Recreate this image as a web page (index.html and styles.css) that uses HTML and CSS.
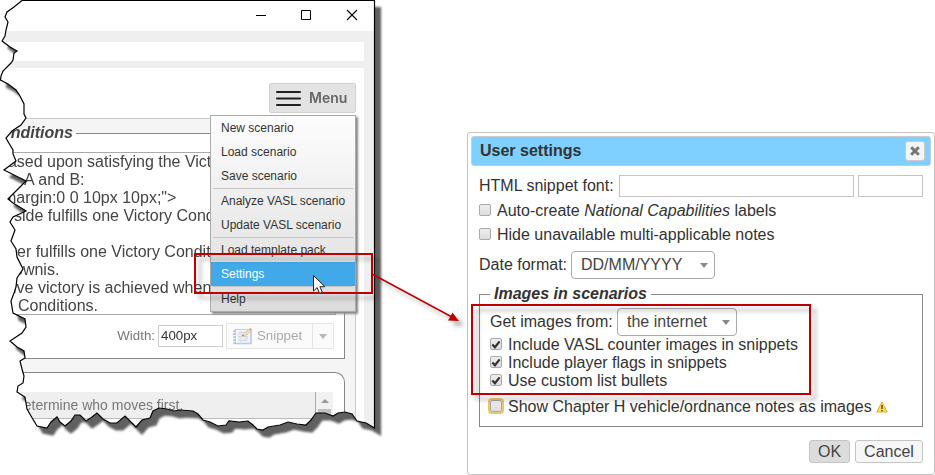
FILE: index.html
```html
<!DOCTYPE html>
<html lang="en">
<head>
<meta charset="utf-8">
<title>User settings</title>
<link rel="stylesheet" href="styles.css">
</head>
<body>
<main class="stage">
  <section class="torn">
    <div class="window">
      <header class="titlebar">
        <svg width="104" height="12" viewBox="0 0 104 12" fill="none" stroke="#000"><path d="M0 6.500h10M45.500 1.500h9v9h-9z"/><path d="M91 1l10 10M101 1l-10 10" stroke-width="1.100"/></svg>
      </header>
      <div class="toolbar"></div>
      <div class="page">
        <div class="page-head">
          <button class="menu-button"><svg width="25" height="17" viewBox="0 0 25 17" stroke="#231f20" stroke-width="2" stroke-linecap="round"><path d="M1 2h23M1 8.500h23M1 15h23"/></svg>Menu</button>
        </div>
        <div class="panel">
          <div class="victory">
            <div class="legend"><span>nditions</span></div>
            <div class="textarea">
              <p class="l1">based upon satisfying the Vict</p>
              <p class="l2">A and B:</p>
              <p class="l3">margin:0 0 10px 10px;"&gt;</p>
              <p class="l4">side fulfills one Victory Cond</p>
              <p>&nbsp;</p>
              <p class="l6">er fulfills one Victory Condit</p>
              <p class="l7">ownis.</p>
              <p class="l8">ive victory is achieved when</p>
              <p class="l9">Conditions.</p>
            </div>
            <div class="snippet-row">
              <label>Width:</label><span class="width-input">400px</span>
              <span class="snippet"><span class="snippet-main">
                <svg width="20" height="18" viewBox="0 0 20 18" fill="none"><path d="M3 2.500h16v14H3z" fill="#f1f6fc" stroke="#c3d4ea"/><path d="M3 16.500h16v-14" stroke="#b7cce8" stroke-width="1.500"/><path d="M1 4h3M1 7h3M1 10h3M1 13h3M1 16h3" stroke="#aaa"/><path d="M7 5.500h8v8H7zM9 4v11M13 4v11M6 9.500h10" stroke="#d0d8e3"/><path d="M10 9l7-7 2 2-7 6z" fill="#f6dcb2" stroke="#d9bf9c" stroke-width=".7"/><path d="M17 2l1.500-1.500 1.500 2L19 4z" fill="#e9a6a0"/><path d="M10 9l.8-2 1.400 1.500z" fill="#777"/></svg>Snippet</span><span class="snippet-drop"><i class="tri"></i></span></span>
            </div>
          </div>
          <div class="ssr">
            <div class="list"><span class="list-text">determine who moves first.</span><span class="scroll"><i class="up"></i><b></b></span></div>
          </div>
        </div>
      </div>
    </div>
    <svg class="edge" width="376" height="432" viewBox="0 0 376 432"><path fill="none" stroke="#000" stroke-width="1.200" d="M22 .5L14 7 7 12 5 17 8 22 6 30 5 36 2 41 10 47 17 51 14 53 13 60 11 63 3 71 1 76 .5 80 8 84 16 90 20 96 24 104 24 114 26 118 21 125 12 131 6 138 10 145 13 150 13 154 16 161 4 170 14 175 26 181 20 187 8 199 13 203 26 211 13 217 10 222 15 230 11 241 16 249 17 257 23 269 17 278 16 287 14 293 11 301 13 313 25 319 26 327 22 333 10 341 17 347 24 351 25 358 20 361 22 369 24 376 23 383 18 386 17 392 25 397 27 409 31 416 37 426 47 428 51 422 57 417 60 422 65 426 71 421 75 415 80 415 86 421 92 417 97 413 103 419 110 423 117 423 125 416 136 427 142 420 150 418 153 411 159 408 167 409 174 411 180 410 193 411 198 414 203 420 210 422 218 426 226 425 229 421 239 422 248 421 253 425 257 429 263 430 268 427 280 425 288 422 297 424 306 425 311 420 316 413 325 413 333 416 338 413 345 412 352 414 357 421 366 423 374.500 428V.5z"/></svg>
  </section>

  <nav class="menu">
    <a>New scenario</a><a>Load scenario</a><a>Save scenario</a><hr>
    <a>Analyze VASL scenario</a><a>Update VASL scenario</a><hr>
    <a>Load template pack</a><a class="active">Settings</a><hr>
    <a>Help</a>
  </nav>

  <section class="dialog">
    <header class="dialog-title">User settings<button class="close"><svg width="10" height="10" viewBox="0 0 10 10" stroke="#777" stroke-width="3"><path d="M1.200 1.200l7.600 7.600M8.800 1.200L1.200 8.800"/></svg></button></header>
    <div class="dialog-body">
      <div class="font-row"><span>HTML snippet font:</span><span class="input wide"></span><span class="input small"></span></div>
      <label class="check"><i class="box"></i><span>Auto-create <em>National Capabilities</em> labels</span></label>
      <label class="check"><i class="box"></i><span>Hide unavailable multi-applicable notes</span></label>
      <div class="date-row"><span>Date format:</span><span class="select date">DD/MM/YYYY<i class="tri"></i></span></div>
      <fieldset class="images">
        <legend>Images in scenarios</legend>
        <div class="source-row"><span>Get images from:</span><span class="select source">the internet<i class="tri"></i></span></div>
        <label class="check tight"><i class="box"><svg width="11" height="11" viewBox="0 0 11 11"><path d="M1.500 5.500L4.300 8.500 9.500 2" fill="none" stroke="#333" stroke-width="2.400"/></svg></i><span>Include VASL counter images in snippets</span></label>
        <label class="check tight"><i class="box"><svg width="11" height="11" viewBox="0 0 11 11"><path d="M1.500 5.500L4.300 8.500 9.500 2" fill="none" stroke="#333" stroke-width="2.400"/></svg></i><span>Include player flags in snippets</span></label>
        <label class="check tight"><i class="box"><svg width="11" height="11" viewBox="0 0 11 11"><path d="M1.500 5.500L4.300 8.500 9.500 2" fill="none" stroke="#333" stroke-width="2.400"/></svg></i><span>Use custom list bullets</span></label>
        <label class="check chapter"><i class="box focus"></i><span>Show Chapter H vehicle/ordnance notes as images</span><svg class="warn" width="12" height="12" viewBox="0 0 12 12"><path d="M6 1L11.300 11H.7z" fill="#ffdc4a" stroke="#d8b13a" stroke-linejoin="round"/><path d="M6 4v4M6 9v1.300" stroke="#5a4a20" stroke-width="1.500"/></svg></label>
      </fieldset>
    </div>
    <footer class="buttons"><button class="btn ok">OK</button><button class="btn cancel">Cancel</button></footer>
  </section>

  <svg class="marks" width="935" height="475" viewBox="0 0 935 475">
    <g fill="none" stroke="#c00000" stroke-width="2"><path d="M195 254h177v39H195zM472 305h338v89H472z"/><path d="M373 274.500L451 316.500" stroke-width="1.500"/><path d="M459 321l-11-.5 4.500-8z" fill="#c00000" stroke="none"/></g>
  </svg>
  <svg class="cursor" width="13" height="20" viewBox="0 0 13 20"><path d="M.5.500v15.500l3.600-3.400 2.500 5.800 2.700-1.200-2.400-5.500h5z" fill="#fff" stroke="#222"/></svg>
</main>
</body>
</html>
```
FILE: styles.css
```css
* { box-sizing: border-box; }
body { margin: 0; background: #fff; color: #333; font: 16px/18px "Liberation Sans", Arial, sans-serif; }
p { margin: 0; }
button { font: inherit; color: inherit; padding: 0; margin: 0; }
.stage { position: relative; width: 935px; height: 475px; overflow: hidden; display: flex; align-items: flex-start; }

.torn { position: relative; width: 376px; height: 432px; flex: none; filter: drop-shadow(6px 7px 1px #606060); }
.edge { position: absolute; left: 0; top: 0; }
.window {
  width: 375px; height: 432px; padding: 1px 11px 0 0; background: #efefef; white-space: nowrap; overflow: hidden;
  clip-path: polygon(22px 0, 14px 7px, 7px 12px, 5px 17px, 8px 22px, 6px 30px, 5px 36px, 2px 41px, 10px 47px, 17px 51px, 14px 53px, 13px 60px, 11px 63px, 3px 71px, 1px 76px, 0 80px, 8px 84px, 16px 90px, 20px 96px, 24px 104px, 24px 114px, 26px 118px, 21px 125px, 12px 131px, 6px 138px, 10px 145px, 13px 150px, 13px 154px, 16px 161px, 4px 170px, 14px 175px, 26px 181px, 20px 187px, 8px 199px, 13px 203px, 26px 211px, 13px 217px, 10px 222px, 15px 230px, 11px 241px, 16px 249px, 17px 257px, 23px 269px, 17px 278px, 16px 287px, 14px 293px, 11px 301px, 13px 313px, 25px 319px, 26px 327px, 22px 333px, 10px 341px, 17px 347px, 24px 351px, 25px 358px, 20px 361px, 22px 369px, 24px 376px, 23px 383px, 18px 386px, 17px 392px, 25px 397px, 27px 409px, 31px 416px, 37px 426px, 47px 428px, 51px 422px, 57px 417px, 60px 422px, 65px 426px, 71px 421px, 75px 415px, 80px 415px, 86px 421px, 92px 417px, 97px 413px, 103px 419px, 110px 423px, 117px 423px, 125px 416px, 136px 427px, 142px 420px, 150px 418px, 153px 411px, 159px 408px, 167px 409px, 174px 411px, 180px 410px, 193px 411px, 198px 414px, 203px 420px, 210px 422px, 218px 426px, 226px 425px, 229px 421px, 239px 422px, 248px 421px, 253px 425px, 257px 429px, 263px 430px, 268px 427px, 280px 425px, 288px 422px, 297px 424px, 306px 425px, 311px 420px, 316px 413px, 325px 413px, 333px 416px, 338px 413px, 345px 412px, 352px 414px, 357px 421px, 366px 423px, 375px 428px, 375px 0);
}
.titlebar { height: 30px; margin-right: -11px; background: #fff; padding: 8px 15px 0 0; display: flex; justify-content: flex-end; }
.toolbar { margin-top: 11px; height: 19px; background: #fff; }
.page { margin-top: 7px; height: 370px; background: #fff; padding-right: 8px; }
.page-head { height: 50px; display: flex; justify-content: flex-end; padding-top: 15px; }
.menu-button { width: 87px; height: 30px; border: 1px solid #d0d0d0; border-radius: 2px; background: #e3e3e3; color: #666; font: 600 14px/20px Inter, sans-serif; display: flex; align-items: center; gap: 8px; padding-left: 6px; }
.panel { height: 320px; background: #f5f5f5; border: solid #ccc; border-width: 1px 1px 0 0; padding: 14px 10px 0 0; }
.victory { height: 226px; background: #fff; border: solid #888; border-width: 1px 1px 1px 0; }
.legend { height: 18px; margin-top: -10px; font-weight: bold; font-style: italic; color: #444; display: flex; }
.legend span { background: linear-gradient(#f5f5f5 9px, #fff 9px); width: 76px; display: flex; justify-content: flex-end; padding-right: 3px; }
.textarea { width: 336px; height: 163px; margin-top: 10px; border: solid #aaa; border-width: 1px 1px 1px 0; background: #fff; color: #444; overflow: hidden; }
.l1 { text-indent: -1px; } .l2 { padding-left: 24px; } .l3 { padding-left: 3px; } .l4 { padding-left: 14px; }
.l6 { padding-left: 17px; } .l7 { padding-left: 14px; } .l8 { padding-left: 13px; } .l9 { padding-left: 18px; }
.snippet-row { display: flex; padding: 8px 10px 0 0; justify-content: flex-end; align-items: center; font-size: 13.300px; color: #777; }
.width-input { width: 65px; height: 22px; margin: 0 3px 0 3px; padding: 1px 2px; border: 1px solid #ccc; color: #333; }
.snippet { display: flex; height: 26px; width: 108px; border: 1px solid #e5e5e5; background: #fbfbfb; color: #aaa; }
.snippet-main { width: 86px; border-right: 1px solid #e5e5e5; display: flex; align-items: center; gap: 5px; padding-left: 5px; font-size: 13.300px; }
.snippet-drop { flex: 1; display: flex; align-items: center; justify-content: center; }
.tri { width: 0; height: 0; border: 4px solid transparent; border-top: 5px solid #888; border-bottom: 0; }
.snippet .tri { border-top-color: #b8b8b8; }
.ssr { margin-top: 13px; height: 60px; background: #fff; border: solid #888; border-width: 1px 1px 0 0; border-radius: 0 10px 0 0; padding: 19px 11px 0 0; }
.list { height: 27px; background: #efefef; border-bottom: 1px solid #bbb; display: flex; justify-content: space-between; color: #777; }
.list-text { padding: 4px 0 0 16px; font-size: 14px; }
.scroll { width: 18px; height: 40px; background: #f1f1f1; border-left: 1px solid #aaa; display: flex; flex-direction: column; align-items: center; }
.up { border: 4px solid transparent; border-top: 0; border-bottom: 4px solid #999; margin: 7px 0 6px; }
.scroll b { width: 13px; height: 30px; background: #c1c1c1; }

.menu { position: absolute; left: 210px; top: 115px; width: 146px; height: 197px; border: 1px solid #aaa; background: linear-gradient(#fdfdfd, #dcdcdc); box-shadow: 2px 2px 2px #888; font-size: 12px; line-height: 24px; white-space: nowrap; color: #333; }
.menu a { display: block; height: 24px; padding-left: 10px; }
.menu hr { height: 1px; margin: 0 2px; border: 0; background: #c4c4c4; }
.menu .active { background: #42a9e8; color: #fff; }

.dialog { width: 468px; height: 343px; margin: 132px 0 0 91px; border: 1px solid #c3c3c3; border-radius: 3px; background: #fff; padding: 3px; flex: none; white-space: nowrap; }
.dialog-title { height: 30px; border: 1px solid #ccc; border-radius: 3px; background: #7fcfff; font-weight: bold; display: flex; align-items: center; justify-content: space-between; padding: 0 5px 0 8px; }
.close { width: 20px; height: 20px; border: 1px solid #ccc; border-radius: 3px; background: #f5f5f5; display: flex; align-items: center; justify-content: center; }
.dialog-body { padding: 9px 8px 0; }
.font-row { display: flex; align-items: center; height: 22px; }
.font-row > :first-child { width: 140px; }
.input { height: 22px; border: 1px solid #c3c3c3; }
.wide { width: 235px; margin-right: 4px; }
.small { width: 65px; }
.check { display: flex; height: 24px; align-items: center; }
.font-row + .check { margin-top: 2px; }
.box { width: 12px; height: 12px; margin: -2px 6px 0 0; border: 1px solid #aaa; border-radius: 2px; background: linear-gradient(#eee, #ddd); display: flex; flex: none; }
.date-row, .source-row { display: flex; align-items: center; }
.date-row { margin-top: 4px; height: 28px; }
.date-row > :first-child { width: 92px; }
.select { border: 1px solid #aaa; border-radius: 4px; height: 28px; padding: 0 6px 0 9px; display: flex; align-items: center; justify-content: space-between; color: #444; }
.date { width: 144px; }
.source { width: 120px; }
.images { margin: 6px 0 0; height: 142px; min-width: 0; border: 1px solid #888; padding: 0 10px; width: 444px; }
.images legend { font-weight: bold; font-style: italic; padding: 0 4px; height: 18px; }
.source-row { margin-top: 5px; height: 28px; }
.source-row > :first-child { width: 127px; }
.tight { height: 18px; }
.chapter { height: 20px; margin-top: 7px; }
.focus { outline: 2px solid #f0c46a; }
.warn { margin-left: 4px; }
.buttons { display: flex; justify-content: flex-end; gap: 5px; padding: 13px 8px 0; }
.btn { height: 23px; line-height: 19px; border: 1px solid #c5c5c5; border-radius: 3px; background: #f6f6f6; color: #444; }
.ok { width: 41px; background: #dcdcdc; }
.cancel { width: 68px; }

.marks { position: absolute; left: 0; top: 0; filter: drop-shadow(5px 5px 2px rgba(0,0,0,.3)); pointer-events: none; }
.cursor { position: absolute; left: 313px; top: 275px; }
```
